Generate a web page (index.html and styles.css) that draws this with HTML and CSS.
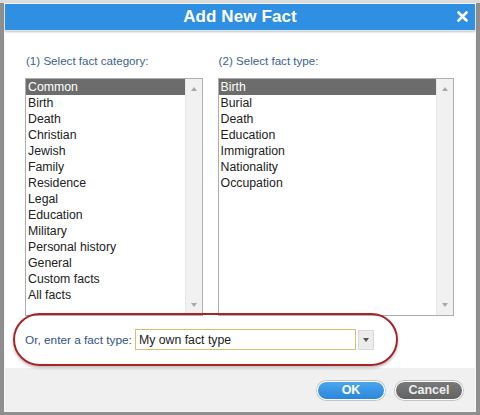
FILE: index.html
```html
<!DOCTYPE html>
<html>
<head>
<title>Add New Fact</title>
<link rel="stylesheet" href="styles.css">
</head>
<body>
  <div class="dialog">
    <div class="title-bar">
      <span class="title">Add New Fact</span>
      <span class="close">
        <svg width="11" height="11" viewBox="0 0 11 11"><path d="M1.5 1.5 L9.5 9.5 M9.5 1.5 L1.5 9.5" stroke="#fff" stroke-width="2.6" stroke-linecap="round"/></svg>
      </span>
    </div>

    <div class="content">
      <div class="columns">
        <div class="column col-category">
          <div class="label">(1) Select fact category:</div>
          <div class="listbox">
            <ul class="options">
              <li class="selected">Common</li>
              <li>Birth</li>
              <li>Death</li>
              <li>Christian</li>
              <li>Jewish</li>
              <li>Family</li>
              <li>Residence</li>
              <li>Legal</li>
              <li>Education</li>
              <li>Military</li>
              <li>Personal history</li>
              <li>General</li>
              <li>Custom facts</li>
              <li>All facts</li>
            </ul>
            <div class="scrollbar">
              <span class="arrow-up"></span>
              <span class="arrow-down"></span>
            </div>
          </div>
        </div>

        <div class="column col-type">
          <div class="label">(2) Select fact type:</div>
          <div class="listbox">
            <ul class="options">
              <li class="selected">Birth</li>
              <li>Burial</li>
              <li>Death</li>
              <li>Education</li>
              <li>Immigration</li>
              <li>Nationality</li>
              <li>Occupation</li>
            </ul>
            <div class="scrollbar">
              <span class="arrow-up"></span>
              <span class="arrow-down"></span>
            </div>
          </div>
        </div>
      </div>

      <div class="custom-row">
        <span class="custom-label">Or, enter a fact type:</span>
        <input type="text" class="custom-input" value="My own fact type">
        <span class="combo-button"><span class="arrow-down dark"></span></span>
      </div>
    </div>

    <div class="footer">
      <button class="btn btn-ok">OK</button>
      <button class="btn btn-cancel">Cancel</button>
    </div>
  </div>
</body>
</html>
```

FILE: styles.css
```css
body {
  margin: 0;
  width: 480px;
  height: 415px;
  overflow: hidden;
  background: linear-gradient(#dcdcdc 0, #dcdcdc 3px, #8e8e8e 3px);
  font-family: "Liberation Sans", Arial, sans-serif;
}

.dialog {
  margin: 3px 4px 0 4px;
  width: 470px;
  height: 407px;
  border: 1px solid #f6f6f6;
  background: #fff;
  display: flex;
  flex-direction: column;
}

.title-bar {
  height: 26px;
  background: #2f8fe2;
  border-bottom: 1px solid #d6e8f8;
  box-shadow: 0 1px 2px rgba(0, 0, 0, 0.25);
  display: flex;
  align-items: center;
  justify-content: center;
  position: relative;
}

.title {
  color: #fff;
  font-weight: bold;
  font-size: 17px;
  letter-spacing: 0.1px;
}

.close {
  position: absolute;
  right: 7px;
  top: 7px;
  line-height: 0;
}

.content {
  flex: 1;
  padding: 23px 21px 0 20px;
}

.columns {
  display: flex;
  gap: 15px;
}

.col-category {
  width: 178px;
}

.col-type {
  width: 237px;
}

.label {
  color: #3d5f92;
  font-size: 11.6px;
  line-height: 14px;
  margin-bottom: 10px;
  padding-left: 1px;
}

.listbox {
  height: 236px;
  border: 1px solid #aeaeae;
  display: flex;
  background: #fff;
}

.options {
  flex: 1;
  list-style: none;
  margin: 0;
  padding: 0;
}

.options li {
  height: 16px;
  line-height: 16px;
  padding-left: 2px;
  font-size: 12.3px;
  color: #222;
}

.options li.selected {
  background: #6c6c6c;
  color: #fff;
}

.scrollbar {
  width: 16px;
  background: #f1f1f1;
  border-left: 1px solid #e6e6e6;
  display: flex;
  flex-direction: column;
  justify-content: space-between;
  align-items: center;
  padding: 8px 0 8px 0;
}

.arrow-up {
  width: 0;
  height: 0;
  border-left: 3.5px solid transparent;
  border-right: 3.5px solid transparent;
  border-bottom: 4px solid #a8a8a8;
}

.arrow-down {
  width: 0;
  height: 0;
  border-left: 3.5px solid transparent;
  border-right: 3.5px solid transparent;
  border-top: 4px solid #a8a8a8;
}

.arrow-down.dark {
  border-top-color: #555;
}

.custom-row {
  margin: -3px 0 0 -12px;
  width: 385px;
  height: 53px;
  box-sizing: border-box;
  border: 2px solid #a9232b;
  border-radius: 27px;
  box-shadow: 0 2px 3px rgba(0, 0, 0, 0.25);
  display: flex;
  align-items: center;
  padding-left: 10px;
  position: relative;
  z-index: 1;
}

.custom-label {
  color: #2f5287;
  font-size: 11.8px;
  margin-right: 3px;
}

.custom-input {
  width: 213px;
  height: 19px;
  padding: 0 3px;
  margin: 0;
  border: 1px solid #d6bf70;
  font-family: "Liberation Sans", Arial, sans-serif;
  font-size: 12.3px;
  color: #222;
  box-sizing: content-box;
}

.combo-button {
  width: 14px;
  height: 18px;
  margin-left: 2px;
  background: #ececec;
  border: 1px solid #d8d8d8;
  display: flex;
  align-items: center;
  justify-content: center;
}

.footer {
  height: 43px;
  background: #f0f0f0;
  display: flex;
  justify-content: flex-end;
  align-items: center;
  gap: 10px;
  padding-right: 12px;
  padding-top: 1px;
  box-sizing: border-box;
}

.btn {
  width: 68px;
  height: 19px;
  border-radius: 10px;
  border: 1px solid #fff;
  box-shadow: 0 0 0 1px #c4c4c4;
  font-family: "Liberation Sans", Arial, sans-serif;
  font-weight: bold;
  font-size: 12.5px;
  padding: 0;
  cursor: pointer;
}

.btn-ok {
  background: linear-gradient(#4aa6ee, #2a86da);
  color: #fff;
}

.btn-cancel {
  background: linear-gradient(#7a7a7a, #626262);
  color: #eee;
}
```
